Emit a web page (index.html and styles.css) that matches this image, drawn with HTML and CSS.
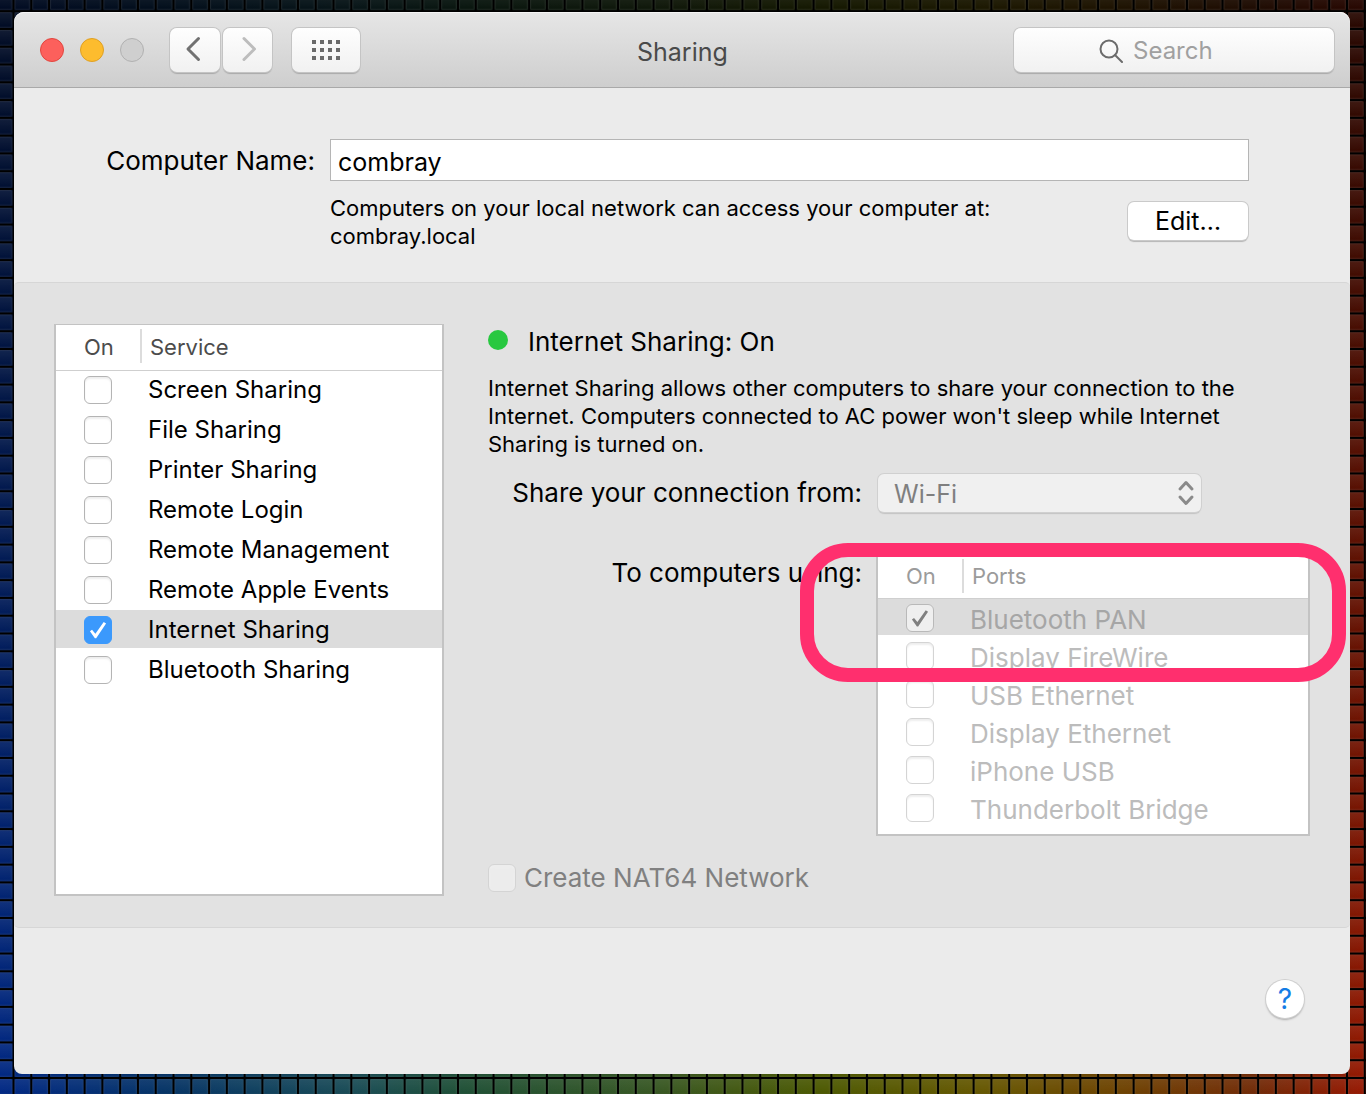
FILE: index.html
```html
<!DOCTYPE html>
<html lang="en">
<head>
<meta charset="utf-8">
<title>Sharing</title>
<link rel="stylesheet" href="styles.css">
</head>
<body>
<svg class="wallpaper" aria-hidden="true">
  <defs>
    <linearGradient id="hues">
      <stop offset="0" stop-color="#002a8c"/>
      <stop offset=".12" stop-color="#04366c"/>
      <stop offset=".26" stop-color="#1a505a"/>
      <stop offset=".34" stop-color="#205438"/>
      <stop offset=".48" stop-color="#3a5c24"/>
      <stop offset=".6" stop-color="#505e00"/>
      <stop offset=".72" stop-color="#6c5c00"/>
      <stop offset=".82" stop-color="#744600"/>
      <stop offset=".92" stop-color="#782c06"/>
      <stop offset="1" stop-color="#a01800"/>
    </linearGradient>
    <linearGradient id="night" x2="0" y2="1">
      <stop offset="0" stop-color="#000" stop-opacity=".76"/>
      <stop offset="1" stop-color="#000" stop-opacity=".06"/>
    </linearGradient>
    <linearGradient id="sheen" x2="0" y2="1">
      <stop offset="0" stop-color="#fff" stop-opacity=".07"/>
      <stop offset="1" stop-color="#fff" stop-opacity="0"/>
    </linearGradient>
    <pattern id="tiles" width="17.78" height="17.78" x="12.5" y="10.2" patternUnits="userSpaceOnUse">
      <path d="M0 0H17.78V2H0zM0 0H2V17.78H0z" fill="#000"/>
      <rect x="2.5" y="2.5" width="14.6" height="14.6" rx="1" fill="url(#sheen)" stroke="#888" stroke-opacity=".18"/>
    </pattern>
  </defs>
  <rect width="100%" height="100%" fill="url(#hues)"/>
  <rect width="100%" height="100%" fill="url(#night)"/>
  <rect width="100%" height="100%" fill="url(#tiles)"/>
</svg>

<main class="window">
  <header class="titlebar">
    <div class="lights">
      <button class="light close" aria-label="Close"></button>
      <button class="light minimize" aria-label="Minimize"></button>
      <button class="light zoom" aria-label="Zoom" disabled></button>
    </div>
    <nav class="history">
      <button class="tool" aria-label="Back"><svg width="20" height="26" viewBox="0 0 20 26"><path d="M13.500 2.500 3 13 13.500 23.500"/></svg></button>
      <button class="tool" aria-label="Forward" disabled><svg width="20" height="26" viewBox="0 0 20 26"><path d="M6 2.500 16.500 13 6 23.500"/></svg></button>
    </nav>
    <button class="tool grid-tool" aria-label="Show All">
      <svg width="28" height="20" viewBox="0 0 28 20"><path d="M2 0V20M10 0V20M18 0V20M26 0V20" stroke-dasharray="4 4"/></svg>
    </button>
    <h1>Sharing</h1>
    <label class="search">
      <svg width="24" height="24" viewBox="0 0 24 24"><circle cx="10" cy="10" r="8.500"/><path d="M16 16 23 23"/></svg>
      <input type="text" placeholder="Search" aria-label="Search">
    </label>
  </header>

  <section class="identity">
    <label for="computer-name">Computer Name:</label>
    <input id="computer-name" type="text" value="combray">
    <p>Computers on your local network can access your computer at:<br>combray.local</p>
    <button class="edit">Edit…</button>
  </section>

  <section class="sharing">
    <div class="list services">
      <table>
        <thead><tr><th>On</th><th>Service</th></tr></thead>
        <tbody>
          <tr><td><input type="checkbox" id="s1"></td><td><label for="s1">Screen Sharing</label></td></tr>
          <tr><td><input type="checkbox" id="s2"></td><td><label for="s2">File Sharing</label></td></tr>
          <tr><td><input type="checkbox" id="s3"></td><td><label for="s3">Printer Sharing</label></td></tr>
          <tr><td><input type="checkbox" id="s4"></td><td><label for="s4">Remote Login</label></td></tr>
          <tr><td><input type="checkbox" id="s5"></td><td><label for="s5">Remote Management</label></td></tr>
          <tr><td><input type="checkbox" id="s6"></td><td><label for="s6">Remote Apple Events</label></td></tr>
          <tr class="selected"><td><input type="checkbox" id="s7" checked></td><td><label for="s7">Internet Sharing</label></td></tr>
          <tr><td><input type="checkbox" id="s8"></td><td><label for="s8">Bluetooth Sharing</label></td></tr>
        </tbody>
      </table>
    </div>

    <div class="detail">
      <h2><span class="status"></span>Internet Sharing: On</h2>
      <p>Internet Sharing allows other computers to share your connection to the Internet. Computers connected to AC power won't sleep while Internet Sharing is turned on.</p>
      <div class="settings">
        <label for="source">Share your connection from:</label>
        <div class="popup">
          <select id="source" disabled><option>Wi-Fi</option></select>
          <svg width="18" height="28" viewBox="0 0 18 28"><path d="M3 10 9 3.500 15 10M3 18 9 24.500 15 18"/></svg>
        </div>
        <span class="using" id="using">To computers using:</span>
        <div class="list ports">
          <table aria-labelledby="using">
            <thead><tr><th>On</th><th>Ports</th></tr></thead>
            <tbody>
              <tr class="selected"><td><input type="checkbox" id="p1" checked disabled></td><td><label for="p1">Bluetooth PAN</label></td></tr>
              <tr><td><input type="checkbox" id="p2" disabled></td><td><label for="p2">Display FireWire</label></td></tr>
              <tr><td><input type="checkbox" id="p3" disabled></td><td><label for="p3">USB Ethernet</label></td></tr>
              <tr><td><input type="checkbox" id="p4" disabled></td><td><label for="p4">Display Ethernet</label></td></tr>
              <tr><td><input type="checkbox" id="p5" disabled></td><td><label for="p5">iPhone USB</label></td></tr>
              <tr><td><input type="checkbox" id="p6" disabled></td><td><label for="p6">Thunderbolt Bridge</label></td></tr>
            </tbody>
          </table>
          <div class="callout"></div>
        </div>
      </div>
      <label class="nat"><input type="checkbox" disabled>Create NAT64 Network</label>
    </div>
  </section>

  <footer><button class="help" aria-label="Help">?</button></footer>
</main>
</body>
</html>
```
FILE: styles.css
```css
* { box-sizing: border-box; }

body {
  margin: 0;
  min-height: 100vh;
  padding: 12px 16px 20px 14px;
  display: flex;
  background: #000;
  color: #000;
  font: 24px/32px Inter, "Liberation Sans", sans-serif;
}

button, input, select { font: inherit; color: inherit; margin: 0; }
h1, h2, p { margin: 0; font-weight: 400; }

.wallpaper {
  position: absolute;
  inset: 0;
  width: 100%;
  height: 100%;
}

.window {
  position: relative;
  flex: 1;
  min-width: 0;
  display: flex;
  flex-direction: column;
  background: #ebebeb;
  border-radius: 10px 10px 8px 8px;
}

/* Title bar */
.titlebar {
  display: grid;
  grid-template-columns: auto auto auto 1fr 320px;
  align-items: center;
  height: 76px;
  padding: 0 16px 0 26px;
  border-bottom: 1px solid #a9a9a9;
  border-radius: 10px 10px 0 0;
  background: linear-gradient(#e6e6e6, #cecece);
  box-shadow: inset 0 1px #f5f5f5;
}

.lights { display: flex; gap: 16px; }

.light {
  width: 24px;
  height: 24px;
  padding: 0;
  border: 1px solid #bbb;
  border-radius: 50%;
  background: #cfcfcf;
}
.close { background: #fc605c; border-color: #e2463f; }
.minimize { background: #fdbc2e; border-color: #dfa023; }
.zoom { border-color: #b1b1b1; }

.history { display: flex; gap: 3px; margin-left: 26px; }

.tool, .search {
  height: 44px;
  border: 0;
  border-radius: 7px;
  background: linear-gradient(#fefefe, #f1f1f1);
  box-shadow: 0 0 0 1px #c4c4c4, 0 2px 1px #a9a9a9;
}
.tool {
  display: grid;
  place-items: center;
  width: 50px;
  padding: 0 0 2px;
}
.tool:disabled { width: 49px; }
.tool svg, .search svg, .popup svg { fill: none; stroke: #717171; stroke-width: 3; stroke-linecap: round; stroke-linejoin: round; }
.tool:disabled svg { stroke: #bdbdbd; }
.grid-tool { width: 68px; margin-left: 20px; padding: 0; }
.grid-tool svg { stroke: #6a6a6a; stroke-width: 4; stroke-linecap: butt; }

h1 { padding: 4px 0 0 277px; font-size: 25px; color: #4a4a4a; white-space: nowrap; }

.search {
  display: flex;
  align-items: center;
  gap: 10px;
  padding: 3px 16px 0 85px;
}
.search svg { flex: none; stroke: #6b6b6b; stroke-width: 2; }
.search input {
  flex: 1;
  min-width: 0;
  padding: 0;
  border: 0;
  background: none;
  outline: 0;
}
.search input::placeholder { color: #a0a0a0; opacity: 1; }

/* Computer name */
.identity {
  display: grid;
  grid-template-columns: 301px 1fr auto;
  column-gap: 15px;
  align-items: center;
  padding: 51px 101px 32px 0;
}
.identity label { padding-top: 2px; text-align: right; font-size: 26px; }
.identity input {
  grid-column: 2 / 4;
  min-width: 0;
  height: 42px;
  padding: 4px 7px 0;
  border: 1px solid #b5b5b5;
  background: #fff;
  font-size: 25px;
}
.identity p { grid-column: 2; padding-top: 13px; font-size: 22px; line-height: 28px; }
.edit {
  width: 120px;
  height: 38px;
  margin: 11px 1px 0 0;
  padding: 0;
  border: 0;
  border-radius: 6px;
  background: #fff;
  box-shadow: 0 0 0 1px #cacaca, 0 2px 1px #b5b5b5;
  font-size: 25px;
}

/* Sharing panel */
.sharing {
  display: flex;
  gap: 44px;
  padding: 41px 40px 31px;
  border: solid #d6d6d6;
  border-width: 1px 0;
  border-radius: 5px;
  background: #e2e2e2;
}

.list {
  position: relative;
  border: 2px solid #c3c3c3;
  border-top-width: 1px;
  background: #fff;
}
.services { flex: 0 0 390px; min-height: 572px; }

table { width: 100%; border-collapse: collapse; }
th, td { padding: 0; text-align: left; font-weight: 400; white-space: nowrap; }
th { height: 45px; font-size: 22px; color: #4c4c4c; }
thead { border-bottom: 1px solid #cfcfcf; }
th:first-child { width: 84px; padding-left: 28px; }
th:last-child {
  padding-left: 10px;
  background: linear-gradient(#dcdcdc, #dcdcdc) 0 4px / 2px 34px no-repeat;
}
.services td { height: 40px; }
td:first-child { padding-left: 28px; }
td:last-child { padding-left: 8px; }
.services .selected { background: linear-gradient(#dcdcdc, #dcdcdc) 0 0 / 100% 38px no-repeat; }

input[type="checkbox"] {
  appearance: none;
  display: block;
  flex: none;
  width: 28px;
  height: 28px;
  border: 1px solid #b4b4b4;
  border-radius: 6px;
  background: #fff;
  box-shadow: inset 0 2px 2px #eee;
}
input[type="checkbox"]:disabled { border-color: #d4d4d4; }
input[type="checkbox"]:checked::before {
  content: "";
  display: block;
  width: 26px;
  height: 26px;
  background: #fff;
  clip-path: polygon(19% 55%, 27% 49%, 40% 64%, 72% 19%, 81% 25%, 43% 82%, 38% 82%);
}
input[type="checkbox"]:checked { border-color: #3b99fc; background: #3b99fc; box-shadow: none; }
input[type="checkbox"]:checked:disabled { border-color: #b9b9b9; background: #efefef; }
input[type="checkbox"]:checked:disabled::before { background: #808080; }

/* Service details */
.detail { flex: 1; min-width: 0; }
h2 { display: flex; align-items: center; gap: 20px; font-size: 26px; line-height: 36px; }
.status { width: 20px; height: 20px; margin-bottom: 4px; border-radius: 50%; background: #28c840; }
.detail p { padding-top: 14px; font-size: 22px; line-height: 28px; max-width: 770px; }

.settings {
  display: grid;
  grid-template-columns: 374px 1fr;
  gap: 42px 16px;
  padding-top: 16px;
}
.settings > label, .using { text-align: right; font-size: 26px; line-height: 38px; }

.popup { position: relative; width: 323px; height: 38px; font-size: 25px; }
.popup select {
  appearance: none;
  width: 100%;
  height: 100%;
  padding: 2px 16px 0;
  border: 0;
  border-radius: 6px;
  background: #f0f0f0;
  box-shadow: 0 0 0 1px #d0d0d0, 0 2px 1px #c4c4c4;
  color: #7f7f7f;
  opacity: 1;
}
.popup svg { position: absolute; right: 6px; top: 5px; stroke: #8a8a8a; }

.ports { margin-left: -2px; height: 282px; }
.ports th { height: 43px; color: #9b9b9b; }
.ports td { height: 38px; color: #bcbcbc; font-size: 26px; }
.ports td:first-child { padding-top: 2px; }
.ports td:last-child { padding-top: 5px; }
.ports .selected { background: linear-gradient(#dcdcdc, #dcdcdc) 0 0 / 100% 37px no-repeat; }
.ports .selected td { color: #a6a6a6; }

.callout {
  position: absolute;
  top: -12px;
  left: -78px;
  right: -38px;
  height: 139px;
  border: 14px solid #ff2f6e;
  border-radius: 48px;
  pointer-events: none;
}

.nat { display: flex; align-items: center; gap: 8px; width: max-content; padding-top: 26px; color: #808080; font-size: 26px; }
.nat input { background: #ececec; }

footer { display: flex; justify-content: flex-end; padding: 52px 46px; }
.help {
  width: 38px;
  height: 38px;
  padding: 0;
  border: 0;
  border-radius: 50%;
  background: #fff;
  box-shadow: 0 0 0 1px #cfcfcf, 0 2px 2px #aaa;
  color: #147ce5;
  font-size: 28px;
}
```
